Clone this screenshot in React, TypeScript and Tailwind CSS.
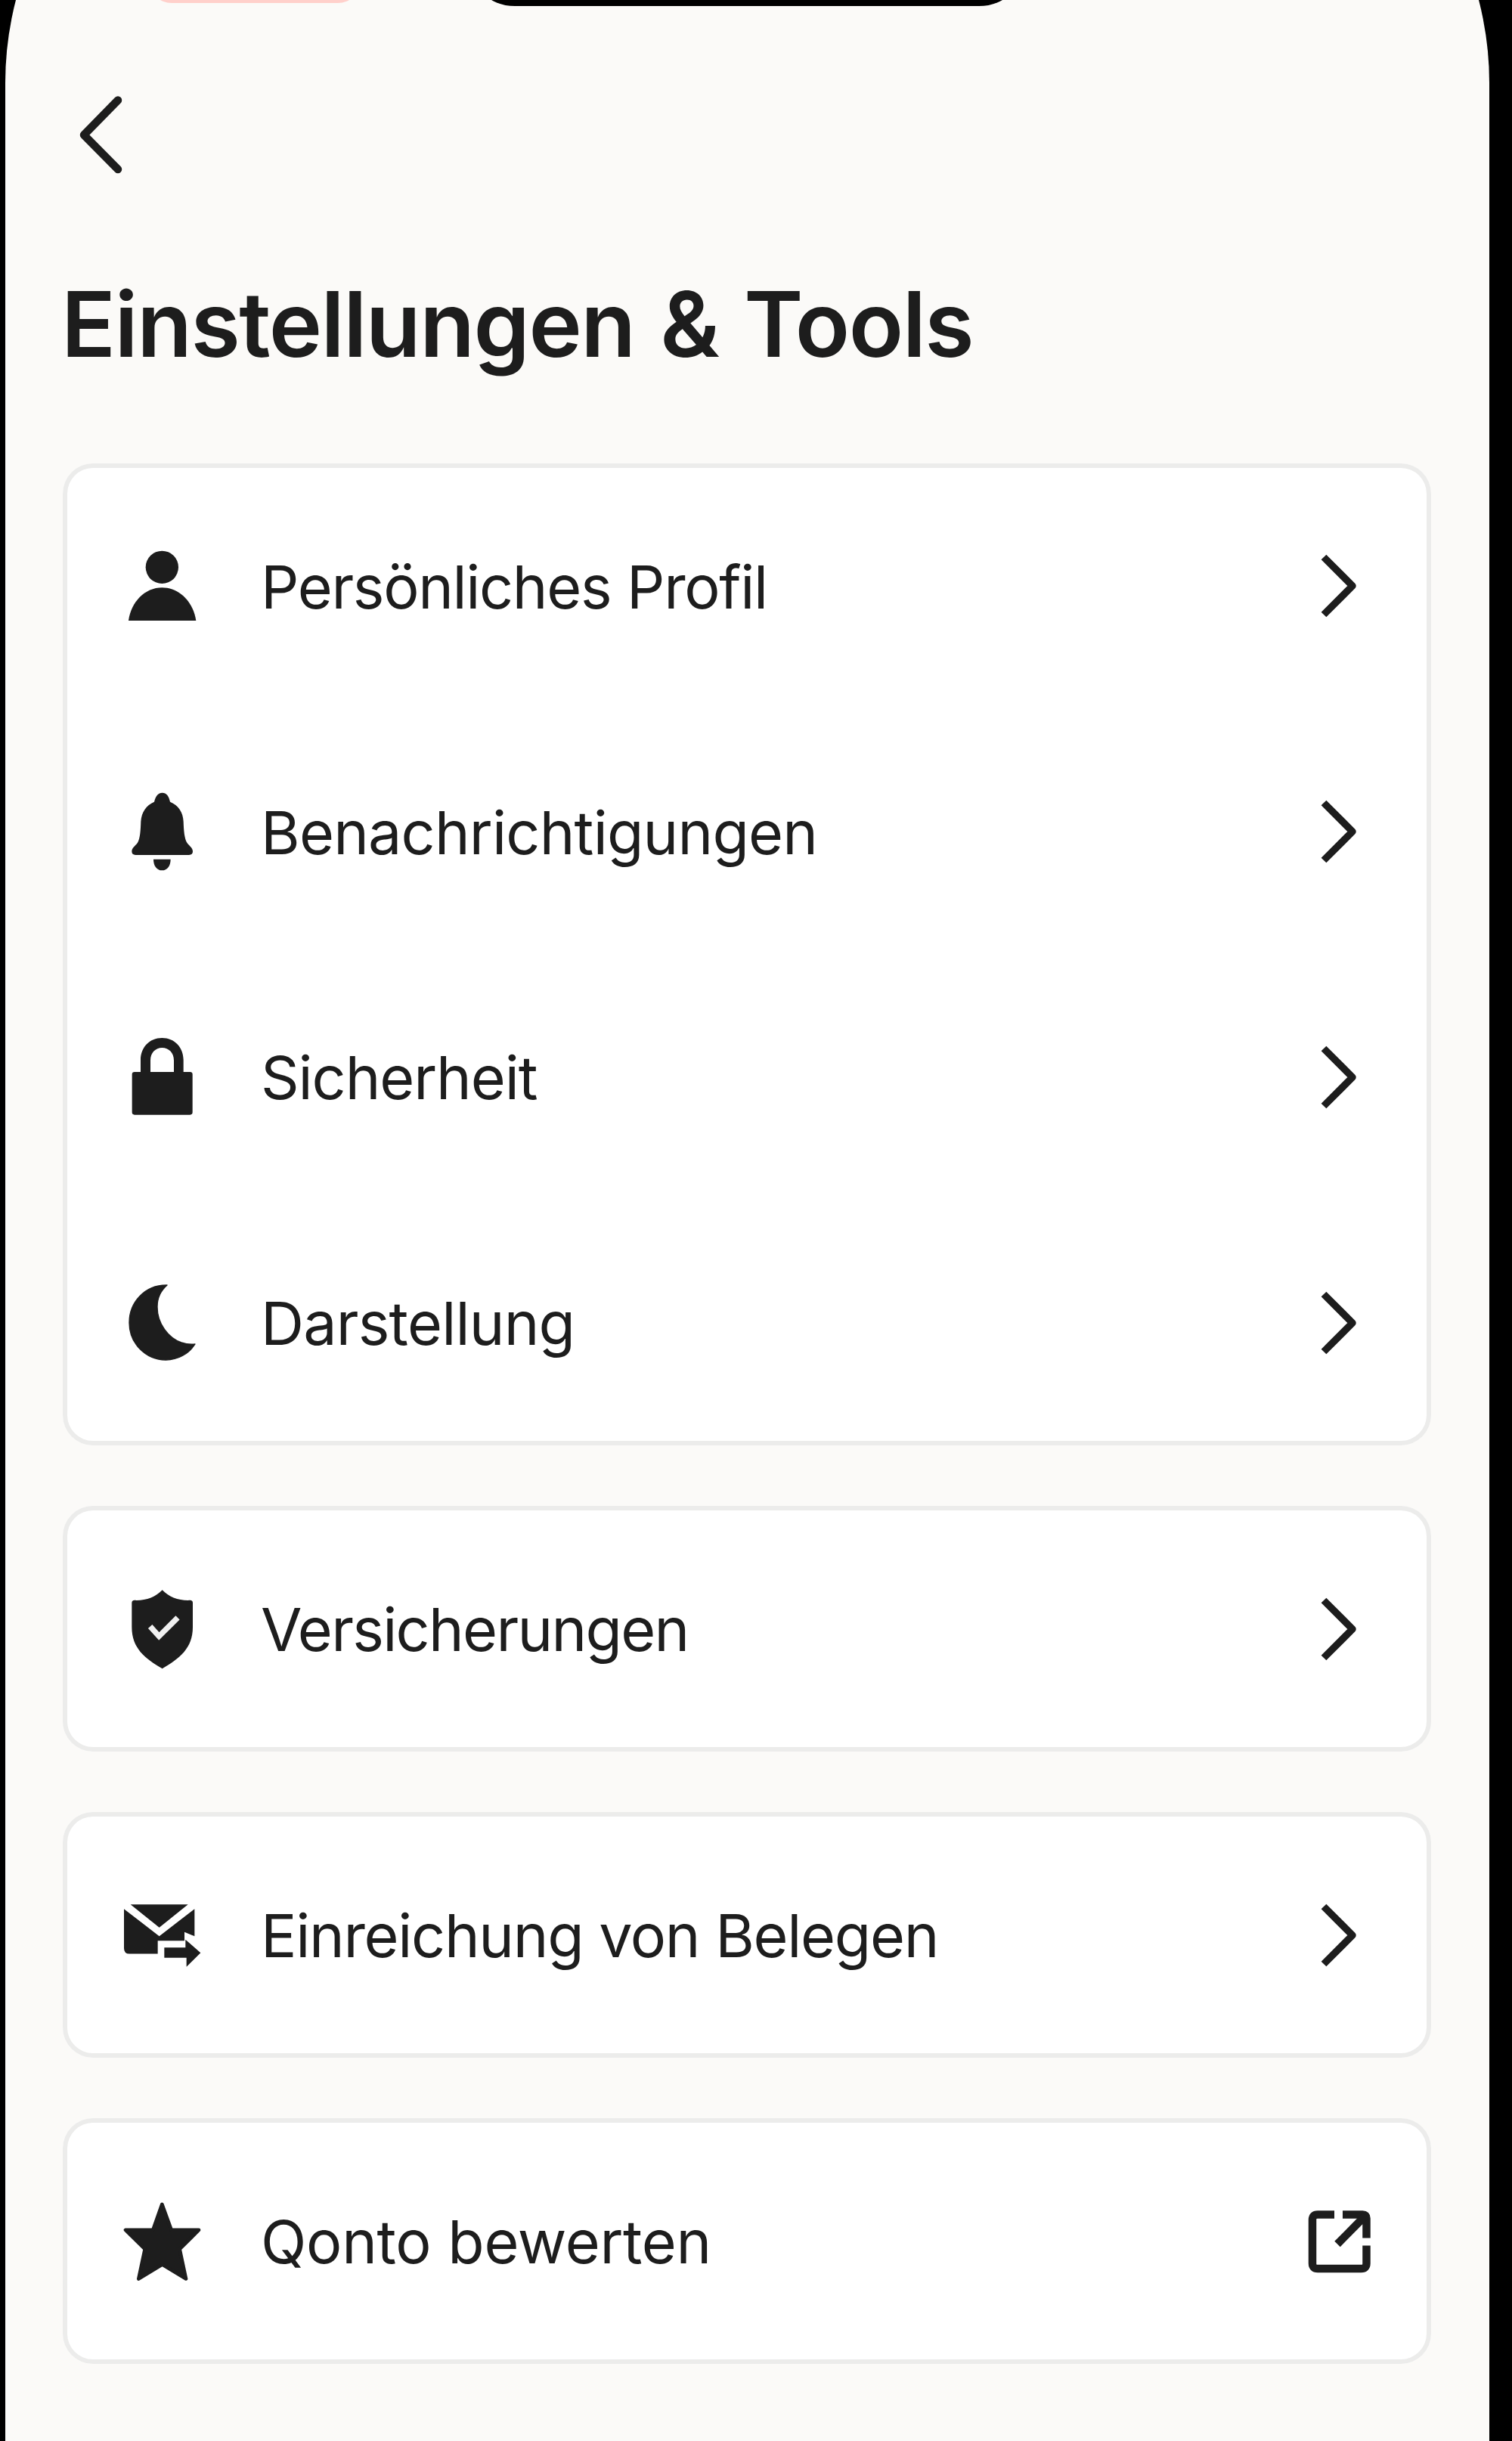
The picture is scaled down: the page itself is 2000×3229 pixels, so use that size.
import type { ReactNode } from "react";

type Item = {
  label: string;
  tracking: string;
  viewBox: string;
  icon: ReactNode;
  external?: boolean;
};

const groups: Item[][] = [
  [
    {
      label: "Persönliches Profil",
      tracking: "tracking-[-1.35px]",
      viewBox: "60 61 330 330",
      icon: (
        <>
          <circle cx="223" cy="152" r="65" />
          <path d="M90 364C100 290 155 233 223 233C292 233 347 290 358 364Z" />
        </>
      ),
    },
    {
      label: "Benachrichtigungen",
      tracking: "tracking-[-0.8px]",
      viewBox: "60 1035 330 330",
      icon: (
        <>
          <path d="M224 1046C240 1046 250 1058 255 1082C288 1096 307 1124 308 1160C309 1195 312 1228 322 1244C332 1258 345 1264 345 1279C345 1288 340 1293 330 1293H118C108 1293 103 1288 103 1279C103 1264 116 1258 126 1244C136 1228 138 1195 139 1160C141 1124 160 1096 192 1082C198 1058 208 1046 224 1046Z" />
          <path d="M189 1310H257C257 1336 244 1354 223 1354C202 1354 189 1336 189 1310Z" />
        </>
      ),
    },
    {
      label: "Sicherheit",
      tracking: "tracking-[-1.1px]",
      viewBox: "60 90 330 330",
      icon: (
        <path
          fillRule="evenodd"
          d="M138 234V186C138 136 174 99 223 99C272 99 308 136 308 186V234H334Q344 234 344 244V394Q344 404 334 404H114Q104 404 104 394V244Q104 234 114 234ZM177 234H270V188C270 158 250 138 223 138C197 138 177 158 177 188Z"
        />
      ),
    },
    {
      label: "Darstellung",
      tracking: "tracking-[-0.8px]",
      viewBox: "60 1064 330 330",
      icon: (
        <path
          strokeWidth="4"
          strokeLinejoin="round"
          stroke="currentColor"
          d="M243 1079C155 1077 93 1148 93 1228C93 1310 158 1376 238 1376C287 1376 329 1351 354 1313C335 1315 318 1313 300 1307C248 1288 204 1232 204 1165C204 1130 220 1099 243 1079Z"
        />
      ),
    },
  ],
  [
    {
      label: "Versicherungen",
      tracking: "tracking-[-1.7px]",
      viewBox: "60 58.5 330 330",
      icon: (
        <>
          <path d="M224 68C250 96 290 111 334 109Q345 109 345 120V215C345 300 292 340 224 380C156 340 103 300 103 215V120Q103 109 114 109C158 111 198 96 224 68Z" />
          <path
            d="M176 213L211 252L285 178"
            fill="none"
            stroke="#f1f1f1"
            strokeWidth="22"
          />
        </>
      ),
    },
  ],
  [
    {
      label: "Einreichung von Belegen",
      tracking: "tracking-[-1.3px]",
      viewBox: "60 43.5 330 330",
      icon: (
        <>
          <path d="M98 86H326L212 178Z" />
          <path d="M72 104L212 212L352 104V212L312 196V230H206V282H94Q72 282 72 260Z" />
          <path d="M232 257H316V226L376 278L320 334V298H232Z" />
        </>
      ),
    },
  ],
  [
    {
      label: "Qonto bewerten",
      tracking: "tracking-[-0.3px]",
      viewBox: "60 58.5 330 330",
      external: true,
      icon: (
        <path
          stroke="currentColor"
          strokeWidth="14"
          strokeLinejoin="round"
          d="M223 76L260 178H369L293 254L318 372L224 315L130 372L155 254L78 178H187Z"
        />
      ),
    },
  ],
];

function ChevronRight() {
  return (
    <svg className="size-[90px] shrink-0" viewBox="0 0 90 90" fill="none" stroke="currentColor" strokeWidth="9.5" strokeLinejoin="round">
      <path d="M24 7L62 45L24 83" />
    </svg>
  );
}

function ExternalLink() {
  return (
    <svg className="size-[90px] shrink-0" viewBox="0 0 90 90" fill="none" stroke="currentColor" strokeWidth="10.5" strokeLinejoin="round">
      <path d="M38 9.5H16Q9 9.5 9 16.5V74Q9 81 16 81H73.5Q80.5 81 80.5 74V50.5" />
      <path d="M49 9.5H75.5Q80.5 9.5 80.5 14.5V40.5" />
      <path d="M42 48.5L79 11" />
    </svg>
  );
}

function Row({ item }: { item: Item }) {
  return (
    <a className="flex flex-1 items-center pr-[76px] pl-[77px]">
      <svg className="size-[110px] shrink-0" viewBox={item.viewBox} fill="currentColor">
        {item.icon}
      </svg>
      <span className={`ml-[75px] flex-1 pt-[2px] text-[79px] leading-none whitespace-nowrap ${item.tracking}`}>
        {item.label}
      </span>
      {item.external ? <ExternalLink /> : <ChevronRight />}
    </a>
  );
}

export default function App() {
  return (
    <div className="relative h-[3229px] w-[2000px] overflow-hidden bg-black font-['Inter',sans-serif] text-[#1d1d1d]">
      <div className="-mt-[330px] ml-[7px] h-[3559px] w-[1963px] rounded-t-[440px] bg-[#fbfaf8] pt-[330px]">
        <header className="pt-[123px] pl-[93px]">
          <svg className="h-[110px] w-[70px]" viewBox="100 123 70 110" fill="none" stroke="currentColor" strokeWidth="10.5" strokeLinecap="round" strokeLinejoin="round">
            <path d="M156 132.5L111 178.5L156 224" />
          </svg>
        </header>
        <h1 className="mt-[126px] ml-[74px] h-[140px] text-[119px] leading-[140px] font-semibold tracking-[-1.5px] whitespace-nowrap [word-spacing:5px]">
          Einstellungen &amp; Tools
        </h1>
        <main className="mt-[114px] ml-[76px] flex w-[1810px] flex-col gap-[80px]">
          {groups.map((items) => (
            <section
              key={items[0].label}
              className={`flex flex-col rounded-[40px] bg-white shadow-[inset_0_0_0_6px_#ececeb] ${items.length > 1 ? "h-[1299px]" : "h-[325px]"}`}
            >
              {items.map((item) => (
                <Row key={item.label} item={item} />
              ))}
            </section>
          ))}
        </main>
      </div>
      <div className="absolute -top-[92px] left-[617px] h-[100px] w-[742px] rounded-b-[64px] bg-black" />
      <div className="absolute -top-[56px] left-[197px] h-[60px] w-[280px] rounded-full bg-[#ffd0cb]" />
    </div>
  );
}
